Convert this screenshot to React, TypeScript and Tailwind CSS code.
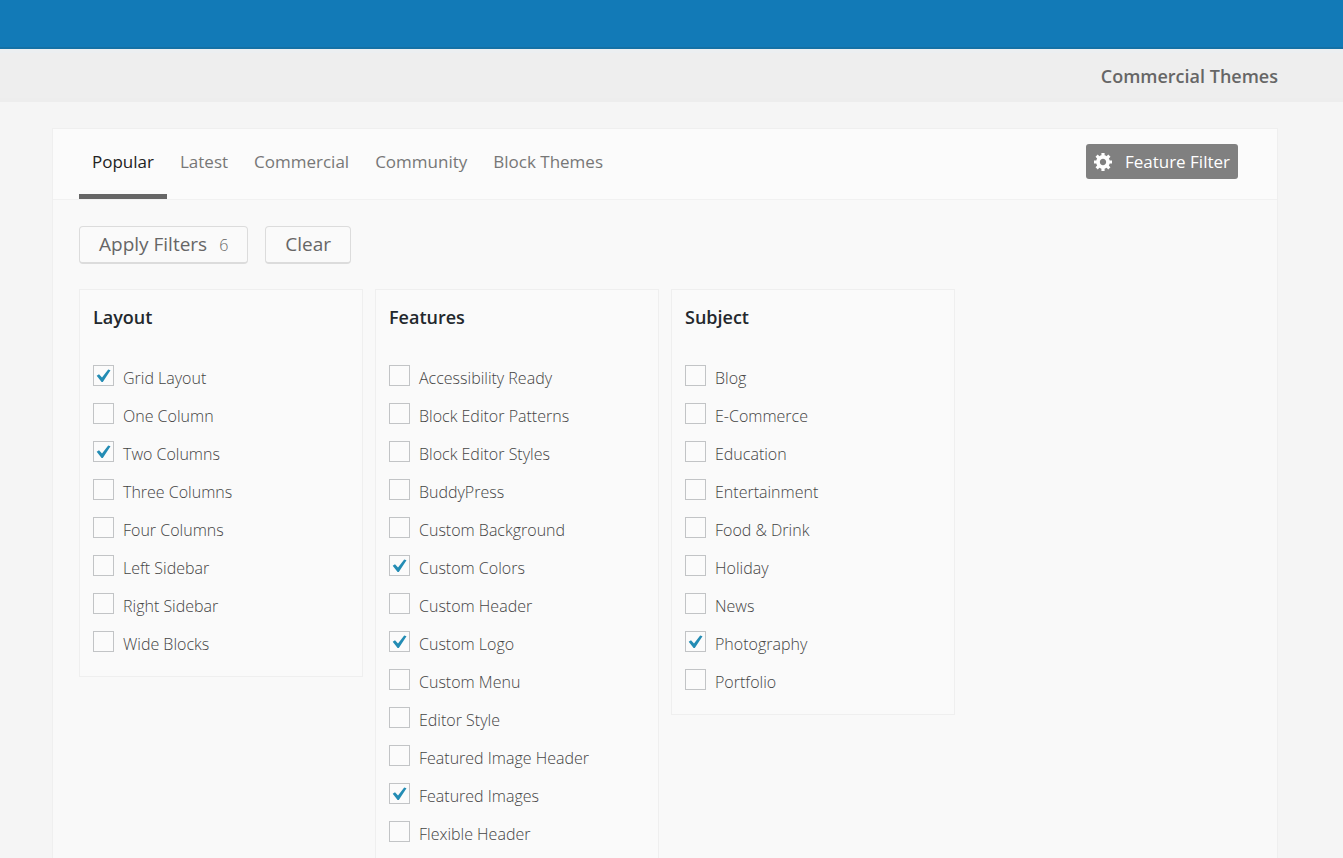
import { useState } from "react";

interface FilterGroup {
  title: string;
  options: string[];
}

const TABS = ["Popular", "Latest", "Commercial", "Community", "Block Themes"];

const GROUPS: FilterGroup[] = [
  {
    title: "Layout",
    options: [
      "Grid Layout",
      "One Column",
      "Two Columns",
      "Three Columns",
      "Four Columns",
      "Left Sidebar",
      "Right Sidebar",
      "Wide Blocks",
    ],
  },
  {
    title: "Features",
    options: [
      "Accessibility Ready",
      "Block Editor Patterns",
      "Block Editor Styles",
      "BuddyPress",
      "Custom Background",
      "Custom Colors",
      "Custom Header",
      "Custom Logo",
      "Custom Menu",
      "Editor Style",
      "Featured Image Header",
      "Featured Images",
      "Flexible Header",
    ],
  },
  {
    title: "Subject",
    options: [
      "Blog",
      "E-Commerce",
      "Education",
      "Entertainment",
      "Food & Drink",
      "Holiday",
      "News",
      "Photography",
      "Portfolio",
    ],
  },
];

const DEFAULT_SELECTED = [
  "Grid Layout",
  "Two Columns",
  "Custom Colors",
  "Custom Logo",
  "Featured Images",
  "Photography",
];

function GearIcon() {
  return (
    <svg className="size-[18px]" viewBox="1 2 17 17" fill="currentColor" aria-hidden="true">
      <path d="M18 12h-2.18c-.17.7-.44 1.35-.81 1.93l1.54 1.54-2.1 2.1-1.54-1.54c-.58.36-1.23.63-1.91.79V19H8v-2.18c-.68-.16-1.33-.43-1.91-.79l-1.54 1.54-2.12-2.12 1.54-1.54c-.36-.58-.63-1.23-.79-1.91H1V9.03h2.17c.16-.7.44-1.35.8-1.94L2.43 5.55l2.1-2.1 1.54 1.54c.58-.37 1.24-.64 1.93-.81V2h3v2.18c.68.16 1.33.43 1.91.79l1.54-1.54 2.12 2.12-1.54 1.54c.36.59.64 1.24.8 1.94H18V12zm-8.5 1.5c1.66 0 3-1.34 3-3s-1.34-3-3-3-3 1.34-3 3 1.34 3 3 3z" />
    </svg>
  );
}

interface FilterOptionProps {
  label: string;
  checked: boolean;
  onToggle: (label: string) => void;
}

function FilterOption({ label, checked, onToggle }: FilterOptionProps) {
  return (
    <li>
      <label className="flex h-[38px] cursor-pointer items-start gap-[9px]">
        <span className="grid shrink-0">
          <input
            type="checkbox"
            checked={checked}
            onChange={() => onToggle(label)}
            className="col-start-1 row-start-1 size-[21px] appearance-none border border-[#c2c4c6] bg-[#fbfbfb]"
          />
          {checked && (
            <svg
              className="pointer-events-none col-start-1 row-start-1 size-[21px] text-[#238cb4]"
              viewBox="0 0 21 21"
              fill="currentColor"
              aria-hidden="true"
            >
              <path d="M15.2 4.6 17.5 5.2 9.8 16.9 8.6 16.9 3.7 10.8 6 9.3 9 12.5z" />
            </svg>
          )}
        </span>
        <span className="text-[16px] leading-[27px]">{label}</span>
      </label>
    </li>
  );
}

export default function App() {
  const [activeTab, setActiveTab] = useState("Popular");
  const [selected, setSelected] = useState<string[]>(DEFAULT_SELECTED);

  const toggle = (label: string) => {
    setSelected((prev) =>
      prev.includes(label) ? prev.filter((l) => l !== label) : [...prev, label],
    );
  };

  return (
    <div className="flex h-screen flex-col overflow-hidden bg-[#f5f5f5] font-['Open_Sans','Noto_Sans',sans-serif] font-light text-[#444]">
      <header className="h-[49px] shrink-0 border-b-2 border-[#1571a5] bg-[#127ab7]" />

      <div className="flex h-[53px] shrink-0 items-center justify-end border-y-4 border-t-[#eceff1] border-b-[#ededed] bg-[#eee] pr-[65px]">
        <a href="#commercial" className="text-[18px] leading-[26px] font-semibold text-[#666]">
          Commercial Themes
        </a>
      </div>

      <main className="mt-[26px] mr-[65px] ml-[52px] grow border border-[#efefef] bg-[#f9f9f9]">
        <div className="flex h-[71px] items-start justify-between border-b border-[#f1f1f1] bg-[#fbfbfb] pr-[39px] pl-[26px]">
          <nav className="flex">
            {TABS.map((tab) => (
              <button
                key={tab}
                type="button"
                onClick={() => setActiveTab(tab)}
                className={`h-[70px] border-b-5 px-[13px] text-[17px] leading-[65px] font-normal ${
                  activeTab === tab ? "border-[#666] text-[#222]" : "border-transparent text-[#777]"
                }`}
              >
                {tab}
              </button>
            ))}
          </nav>
          <button
            type="button"
            className="mt-[15px] flex h-[35px] items-center gap-[13px] rounded-[3px] bg-[#808080] px-2 text-[17px] font-normal text-white"
          >
            <GearIcon />
            Feature Filter
          </button>
        </div>

        <div className="px-[26px] pt-[26px]">
          <div className="flex gap-[17px]">
            <button
              type="button"
              className="flex h-[38px] items-center gap-3 rounded-[4px] border border-b-2 border-[#dcdcdc] bg-[#fafafa] px-[19px] text-[19px] font-normal text-[#666]"
            >
              Apply Filters
              <span className="text-[16px] font-light">{selected.length}</span>
            </button>
            <button
              type="button"
              onClick={() => setSelected([])}
              className="flex h-[38px] items-center rounded-[4px] border border-b-2 border-[#dcdcdc] bg-[#fafafa] px-[19px] text-[19px] font-normal text-[#666]"
            >
              Clear
            </button>
          </div>

          <div className="mt-[25px] grid grid-cols-4 items-start gap-3">
            {GROUPS.map((group) => (
              <fieldset
                key={group.title}
                className="border border-[#efefef] bg-[#fafafa] px-[13px] pt-[13px] pb-[7px]"
              >
                <legend className="float-left mb-[34px] w-full text-[18px] leading-[28px] font-semibold text-[#23282d]">
                  {group.title}
                </legend>
                <ul className="clear-both">
                  {group.options.map((option) => (
                    <FilterOption
                      key={option}
                      label={option}
                      checked={selected.includes(option)}
                      onToggle={toggle}
                    />
                  ))}
                </ul>
              </fieldset>
            ))}
          </div>
        </div>
      </main>
    </div>
  );
}
